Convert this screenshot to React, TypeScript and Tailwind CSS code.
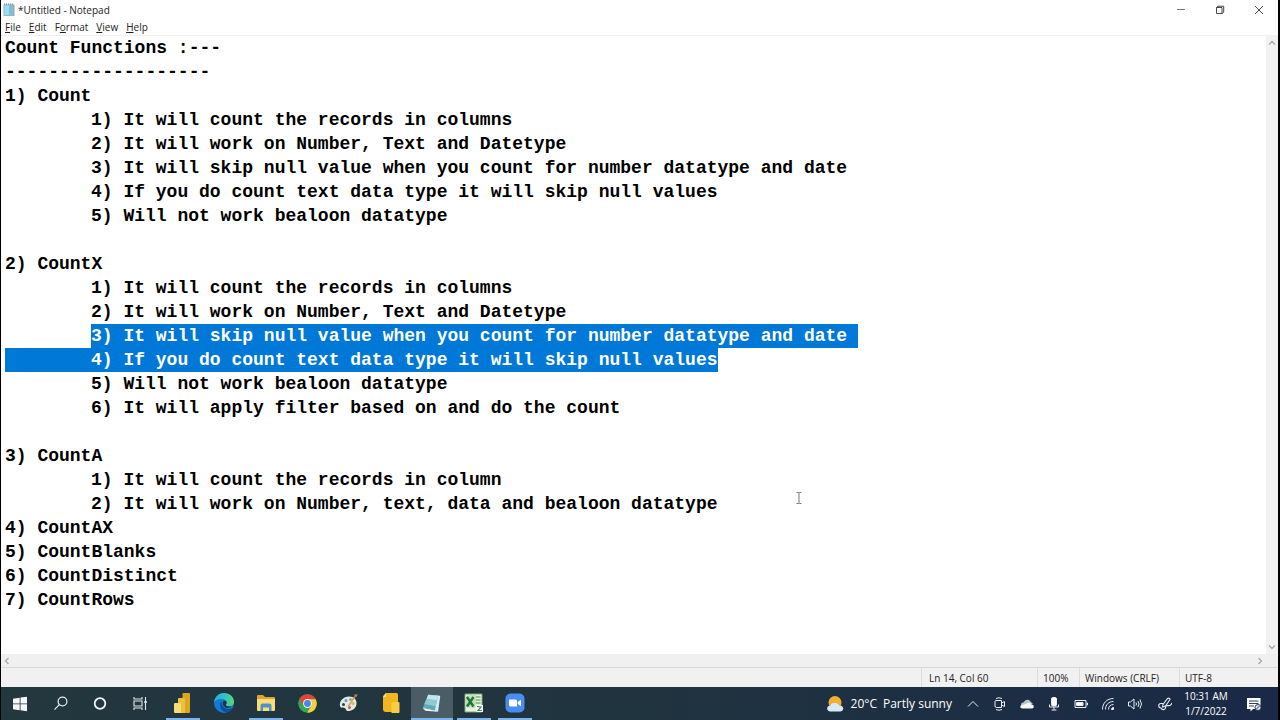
import { useEffect, useRef, type ReactNode } from "react";

const INDENTED_SELECTION =
  "3) It will skip null value when you count for number datatype and date\n\t4) If you do count text data type it will skip null values";

const NOTE = `Count Functions :---
-------------------
1) Count
\t1) It will count the records in columns
\t2) It will work on Number, Text and Datetype
\t3) It will skip null value when you count for number datatype and date
\t4) If you do count text data type it will skip null values
\t5) Will not work bealoon datatype

2) CountX
\t1) It will count the records in columns
\t2) It will work on Number, Text and Datetype
\t${INDENTED_SELECTION}
\t5) Will not work bealoon datatype
\t6) It will apply filter based on and do the count

3) CountA
\t1) It will count the records in column
\t2) It will work on Number, text, data and bealoon datatype
4) CountAX
5) CountBlanks
6) CountDistinct
7) CountRows`;

const MENUS: [string, string, string][] = [
  ["", "F", "ile"],
  ["", "E", "dit"],
  ["F", "o", "rmat"],
  ["", "V", "iew"],
  ["", "H", "elp"],
];

function NotepadIcon({ className }: { className: string }) {
  return (
    <svg viewBox="0 0 20 20" className={className} aria-hidden="true">
      <path d="M7 2.5 17.5 3.5 15.5 18 3 15.5Z" fill="#d9eef2" />
      <path d="M6.5 2.5 15.5 3.5 12.5 17 1.5 14.5Z" fill="#5fa9b8" />
      <path d="M6.5 2.5 15.5 3.5 14.6 7.5 5 6.5Z" fill="#bfe6ec" />
      <path d="M5 6.5 14.6 7.5 13.4 13 3 11Z" fill="#8fcbd6" />
      <path d="M1.5 14.5 12.5 17 15.5 18 4 17Z" fill="#f2f8f8" />
    </svg>
  );
}

function TitleIcon() {
  return (
    <svg viewBox="0 0 14 14" className="ml-px size-[14px]" aria-hidden="true">
      <path d="M3 1.5H12.5V13H3Z" fill="#a9a39a" />
      <path d="M1.5 1.5H11.500V13H1.500Z" fill="#7cc0d6" />
      <path d="M2.500 2.500H7V12H2.500Z" fill="#a5dbe8" />
      <path d="M2 1H12" stroke="#6b7f88" strokeWidth="1" strokeDasharray="1 1" />
    </svg>
  );
}

function TitleBar() {
  return (
    <header className="flex h-[19px] items-center bg-white">
      <TitleIcon />
      <h1 className="ml-[2px] flex-1 text-[10px] leading-4 text-[#222]">*Untitled - Notepad</h1>
      <button aria-label="Minimize" className="flex h-[19px] w-[39px] items-center justify-center">
        <svg viewBox="0 0 10 10" className="size-[10px]" stroke="#777" aria-hidden="true">
          <path d="M1 4.5H9" />
        </svg>
      </button>
      <button aria-label="Restore" className="flex h-[19px] w-[39px] items-center justify-center">
        <svg viewBox="0 0 10 10" className="size-[10px]" fill="none" stroke="#333" strokeWidth="0.9" aria-hidden="true">
          <path d="M1.5 2.5H7V8.5H1.5ZM1.5 2.5 3 1.2H8.7V7.2L7 8.5" />
        </svg>
      </button>
      <button aria-label="Close" className="flex h-[19px] w-[39px] items-center justify-center">
        <svg viewBox="0 0 10 10" className="size-[10px]" stroke="#333" strokeWidth="0.9" aria-hidden="true">
          <path d="M1 1 9 9M9 1 1 9" />
        </svg>
      </button>
    </header>
  );
}

function MenuBar() {
  return (
    <nav className="flex h-[17px] items-center gap-2 border-b border-[#f0f0f0] bg-white pl-1">
      {MENUS.map(([before, key, after]) => (
        <button key={key} className="text-[10px] leading-4 text-[#222]">
          {before}
          <span className="underline underline-offset-1">{key}</span>
          {after}
        </button>
      ))}
    </nav>
  );
}

function ScrollButton({ label, d }: { label: string; d: string }) {
  return (
    <button aria-label={label} className="flex size-3 items-center justify-center">
      <svg viewBox="0 0 8 8" className="size-2" fill="none" stroke="#a8a8a8" strokeWidth="1.3" aria-hidden="true">
        <path d={d} />
      </svg>
    </button>
  );
}

function Editor() {
  const ref = useRef<HTMLTextAreaElement>(null);

  useEffect(() => {
    const start = NOTE.indexOf(INDENTED_SELECTION, NOTE.indexOf("2) CountX"));
    ref.current?.focus({ preventScroll: true });
    ref.current?.setSelectionRange(start, start + INDENTED_SELECTION.length);
  }, []);

  return (
    <main className="flex flex-1 flex-col">
      <div className="relative flex flex-1">
        <textarea
          ref={ref}
          aria-label="Text editor"
          defaultValue={NOTE}
          spellCheck={false}
          wrap="off"
          className="min-w-0 flex-1 resize-none overflow-hidden bg-white pl-1 font-['Liberation_Mono',monospace] text-[18px] leading-6 font-bold text-black outline-none [tab-size:86px] selection:bg-[#0078d7] selection:text-white"
        />
        <div className="flex w-3 flex-col justify-between bg-[#f2f2f2] py-px">
          <ScrollButton label="Scroll up" d="M1 5.5 4 2.5 7 5.5" />
          <ScrollButton label="Scroll down" d="M1 2.5 4 5.5 7 2.5" />
        </div>
        <svg viewBox="0 0 8 12" className="pointer-events-none absolute top-[456px] left-[794px] h-3 w-2" fill="none" stroke="#666" strokeWidth="0.9" aria-hidden="true">
          <path d="M1.5.5H3.5L4 1 4.5.5H6.5M4 1V11M1.5 11.5H3.5L4 11 4.5 11.5H6.5" />
        </svg>
      </div>
      <div className="flex h-[13px] items-center justify-between bg-[#f0f0f0] pr-3">
        <ScrollButton label="Scroll left" d="M5.5 1 2.5 4 5.5 7" />
        <ScrollButton label="Scroll right" d="M2.5 1 5.5 4 2.5 7" />
      </div>
    </main>
  );
}

function StatusBar() {
  const cell = "flex items-center border-l border-[#dcdcdc] ";
  return (
    <footer className="flex h-5 justify-end border-t border-[#d9d9d9] bg-[#f1f1f1] text-[10px] leading-4 text-[#222]">
      <span className={cell + "w-[116px] pl-[7px]"}>Ln 14, Col 60</span>
      <span className={cell + "w-[42px] pl-[5px]"}>100%</span>
      <span className={cell + "w-[100px] pl-[5px]"}>Windows (CRLF)</span>
      <span className={cell + "w-[99px] pl-[5px]"}>UTF-8</span>
    </footer>
  );
}

const SYSTEM_BUTTONS: { name: string; icon: ReactNode }[] = [
  {
    name: "Start",
    icon: <path d="M2 4.700 8.700 3.700V9.500H2ZM9.500 3.600 16 2.700V9.500H9.500ZM2 10.300H8.700V16.200L2 15.200ZM9.500 10.300H16V17.200L9.500 16.300Z" fill="#f4f8f8" />,
  },
  {
    name: "Search",
    icon: (
      <g fill="none" stroke="#e8eeee" strokeWidth="1.2">
        <circle cx="11.5" cy="7.500" r="4.4" />
        <path d="M8.3 10.700 3.5 15.700" />
      </g>
    ),
  },
  { name: "Cortana", icon: <circle cx="9" cy="9.500" r="5.3" fill="none" stroke="#f1f5f5" strokeWidth="1.8" /> },
  {
    name: "Task View",
    icon: (
      <g fill="none" stroke="#e3eaea" strokeWidth="1.1">
        <path d="M3 3V5H11V3M3 16V14H11V16M3 7H11V12H3ZM14.500 3V16" />
        <path d="M13.3 8H15.700" strokeWidth="2" />
      </g>
    ),
  },
];

type TaskbarApp = { name: string; open?: boolean; active?: boolean; icon: ReactNode };

const APPS: TaskbarApp[] = [
  {
    name: "Power BI",
    open: true,
    icon: (
      <svg viewBox="0 0 20 20" className="size-5" aria-hidden="true">
        <path d="M10.5 0H16a1 1 0 0 1 1 1V19a1 1 0 0 1-1 1H9.5V1a1 1 0 0 1 1-1Z" fill="#dba520" />
        <path d="M6 5H11a1 1 0 0 1 1 1V20H5V6a1 1 0 0 1 1-1Z" fill="#edc13a" />
        <path d="M2 10H7a1 1 0 0 1 1 1V20H2a1 1 0 0 1-1-1V11a1 1 0 0 1 1-1Z" fill="#f7dc75" />
      </svg>
    ),
  },
  {
    name: "Microsoft Edge",
    icon: (
      <svg viewBox="0 0 20 20" className="size-5" aria-hidden="true">
        <defs>
          <linearGradient id="edge-top" x1="0" x2="1">
            <stop offset="0" stopColor="#2aa9e0" />
            <stop offset="0.6" stopColor="#35c5c3" />
            <stop offset="1" stopColor="#62d764" />
          </linearGradient>
        </defs>
        <circle cx="10" cy="10" r="10" fill="#1479cf" />
        <path d="M0 9.5C.5 4 4.700 0 10 0c5.500 0 10 4 10 8.500 0 3-2.200 5-5 5-1.800 0-3.200-.6-3.200-1.500 0-.7.900-.8.900-2.400C12.700 7.500 10.500 6 7.500 6 4 6 1 7.500 0 9.500Z" fill="url(#edge-top)" />
        <path d="M7.500 8.500C5 11 6 16.500 10.500 18.700 14 19.500 17 18 18.700 15c-3 1.600-6.500 1.400-8.700-.5-1.700-1.500-2.600-3.700-2.500-6Z" fill="#0d4e9c" />
        <path d="M12.600 9c.3 1.800-1.100 2.300-.7 3.300.6 1.200 3.600 1.600 5.600.5-1.500 2.300-5 3-7.300.8C8.500 12 8.500 9.500 9.500 8c1.200-.8 2.800-.2 3.100 1Z" fill="#22363d" />
      </svg>
    ),
  },
  {
    name: "File Explorer",
    open: true,
    icon: (
      <svg viewBox="0 0 20 20" className="size-5" aria-hidden="true">
        <path d="M1 3a1 1 0 0 1 1-1H7L9 4H18a1 1 0 0 1 1 1V8H1Z" fill="#e0a52c" />
        <path d="M1 6H19V17a1 1 0 0 1-1 1H2a1 1 0 0 1-1-1Z" fill="#fbdc7b" />
        <path d="M4.500 18V12.500a2 2 0 0 1 2-2H13.500a2 2 0 0 1 2 2V18H13V14.500H7V18Z" fill="#4d94c3" />
      </svg>
    ),
  },
  {
    name: "Google Chrome",
    icon: (
      <svg viewBox="0 0 20 20" className="size-[19px]" aria-hidden="true">
        <circle cx="10" cy="10" r="9.800" fill="#36a853" />
        <path d="M10 10 1.500 5.100A9.800 9.800 0 0 1 18.500 5.100Z" fill="#df4436" />
        <path d="M1.500 5.100 5.900 12.500 10 10 7 5Z" fill="#df4436" />
        <path d="M10 5.400H18.600A9.800 9.800 0 0 1 9.700 19.800L14 12.300Z" fill="#f8cd3f" />
        <circle cx="10" cy="10" r="4.700" fill="#f5f7f7" />
        <circle cx="10" cy="10" r="3.600" fill="#4a87e8" />
      </svg>
    ),
  },
  {
    name: "Paint",
    icon: (
      <svg viewBox="0 0 20 20" className="size-5" aria-hidden="true">
        <path d="M1 13C0 8 4.500 3.500 10 3.500c5 0 8 3 7.500 7.500-.4 4.500-4.500 7-8.500 7-2.500 0-1.500-2.500-3.500-3C3.500 14.500 1.700 15.500 1 13Z" fill="#e4e8e3" />
        <circle cx="4.500" cy="11.500" r="1.500" fill="#27454b" />
        <circle cx="7" cy="7.500" r="1.500" fill="#5c9fca" />
        <circle cx="11.500" cy="6.500" r="1.300" fill="#77a85d" />
        <circle cx="14" cy="10.500" r="1.500" fill="#d8b84c" />
        <circle cx="10.500" cy="14.500" r="1.500" fill="#c65b4b" />
        <path d="M9 14 15.500 4" stroke="#cda26b" strokeWidth="1.400" />
        <path d="M15 5 15.500 1.500 18.500 1 18 3.500Z" fill="#b27a4d" />
      </svg>
    ),
  },
  {
    name: "Power BI Report Builder",
    icon: (
      <svg viewBox="0 0 20 20" className="size-5" aria-hidden="true">
        <path d="M5 0H15.500a1.500 1.500 0 0 1 1.500 1.500V19H5A3 3 0 0 1 2 16V3Z" fill="#f3b61f" />
        <path d="M2 4 5 0V4Z" fill="#ffe08a" />
        <path d="M11.500 9H17.500a1 1 0 0 1 1 1V19a1 1 0 0 1-1 1H10.500V10a1 1 0 0 1 1-1Z" fill="#f9ce45" />
      </svg>
    ),
  },
  { name: "Notepad", open: true, active: true, icon: <NotepadIcon className="size-[22px]" /> },
  {
    name: "Excel",
    open: true,
    icon: (
      <svg viewBox="0 0 20 20" className="size-5" aria-hidden="true">
        <path d="M1 1H18V19H1Z" fill="#e8f1e3" stroke="#76a873" strokeWidth="1" />
        <path d="M12 4H16.500M12 7H16.500M12 10H16.500" stroke="#7bb274" strokeWidth="1.500" />
        <path d="M1.500 3 12 1.500V15.500L1.500 14Z" fill="#c2dfb4" />
        <path d="M3 4 9.500 13.500M9.500 4 3 13.500" stroke="#22753b" strokeWidth="2.500" />
        <path d="M11 12H19V19H12.500Z" fill="#fff" />
        <path d="M13 13.500 17 14 14 17.500H18" fill="none" stroke="#3b9150" strokeWidth="1.200" />
      </svg>
    ),
  },
  {
    name: "Zoom",
    open: true,
    icon: (
      <svg viewBox="0 0 20 20" className="size-5" aria-hidden="true">
        <rect x="0.500" y="0.500" width="19" height="19" rx="5" fill="#4a8cf2" />
        <path d="M4 6.500H10.500a1.500 1.500 0 0 1 1.500 1.500V13.500H5.500A1.500 1.500 0 0 1 4 12ZM12.700 9 16 6.700V13.300L12.700 11Z" fill="#fff" />
      </svg>
    ),
  },
];

const TRAY: { name: string; icon: ReactNode }[] = [
  { name: "Show hidden icons", icon: <path d="M3 10.500 8 5.500 13 10.500" /> },
  {
    name: "Meet Now",
    icon: <path d="M4 4.500H9.500V11.500H4.500A1.500 1.500 0 0 1 3 10V5.500A1 1 0 0 1 4 4.500ZM9.500 7 12.500 5.500V10.500L9.500 9M4 2.500Q7 1 10 2.500M4 13.500Q7 15 10 13.500" />,
  },
  {
    name: "OneDrive",
    icon: (
      <g stroke="none">
        <path d="M2 9.500C1.500 7 4 6 5 6.200 6 3.500 10 3 11.500 5.500L14 8Z" fill="#b8c2ca" />
        <path d="M3.500 12.500C1 12.500.5 9.500 3 9 5 8.700 6 8.500 7.500 7.500 9.500 6 12 7 12.500 8.500 15.500 8.500 15.500 12.500 13 12.500Z" fill="#f3f6f8" />
      </g>
    ),
  },
  {
    name: "Microphone",
    icon: (
      <g>
        <rect x="5.500" y="1.500" width="5" height="8.500" rx="1.500" fill="#fff" />
        <path d="M3.500 8.500V11H12.500V8.500M8 11V14M5.500 14H10.500" />
      </g>
    ),
  },
  {
    name: "Battery",
    icon: (
      <g>
        <path d="M2 4.500H13V11.500H2ZM13.500 7H14.500V9H13.500" />
        <path d="M3.500 6.500H10V9.500H3.500Z" fill="#fff" />
      </g>
    ),
  },
  {
    name: "Wi-Fi",
    icon: (
      <g>
        <path d="M2.500 13.500C2.500 7 7 2.500 13.500 2.500M5.500 13.500C5.500 8.700 8.700 5.500 13.500 5.500M8.500 13.500C8.500 10.400 10.400 8.500 13.500 8.500" />
        <path d="M11.500 13.500A2 2 0 0 1 13.500 11.500V13.500Z" fill="#fff" />
      </g>
    ),
  },
  {
    name: "Volume",
    icon: <path d="M1.500 6H3.500L7 3V13L3.500 10H1.500ZM9 6.500Q10 8 9 9.500M11 5Q13 8 11 11M13 3.500Q16 8 13 12.500" />,
  },
];

function WeatherIcon() {
  return (
    <svg viewBox="0 0 18 18" className="size-[18px]" aria-hidden="true">
      <circle cx="9" cy="7.500" r="6.500" fill="#f5ad32" />
      <path d="M4.500 16.500C0 16.500 0 10.500 4.500 10.500 6 6.500 12 7 13 10.500 18.500 10 18.500 16.500 14 16.500Z" fill="#d7eafa" />
    </svg>
  );
}

function Taskbar() {
  return (
    <nav aria-label="Taskbar" className="flex h-[33px] bg-linear-to-r from-[#22373e] via-[#20343f] to-[#192947] text-white">
      {SYSTEM_BUTTONS.map(({ name, icon }) => (
        <button key={name} aria-label={name} className="flex w-10 items-center justify-center">
          <svg viewBox="0 0 20 20" className="size-5" aria-hidden="true">
            {icon}
          </svg>
        </button>
      ))}
      <div className="ml-px grid w-[374px] grid-cols-9">
        {APPS.map(({ name, open, active, icon }) => (
          <button
            key={name}
            aria-label={name}
            className={active ? "flex flex-col items-center bg-[#4a5d66]" : "flex flex-col items-center"}
          >
            <span className="flex flex-1 items-center pt-px">{icon}</span>
            <span className={active ? "h-0.5 w-full bg-[#7db5ea]" : open ? "h-0.5 w-[34px] bg-[#7db5ea]" : "h-0.5"} />
          </button>
        ))}
      </div>
      <div className="flex flex-1 justify-end">
        <button className="flex items-center pr-[7px] text-[12px]">
          <WeatherIcon />
          <span className="ml-[7px]">20°C</span>
          <span className="ml-1.5">Partly sunny</span>
        </button>
        {TRAY.map(({ name, icon }) => (
          <button key={name} aria-label={name} className="flex w-[27px] items-center justify-center">
            <svg viewBox="0 0 16 16" className="size-4" fill="none" stroke="#e9eef3" strokeWidth="1" aria-hidden="true">
              {icon}
            </svg>
          </button>
        ))}
        <button aria-label="Pen workspace" className="flex w-[34px] items-center justify-center">
          <svg viewBox="0 0 16 16" className="size-4" fill="none" stroke="#e9eef3" strokeWidth="1.100" aria-hidden="true">
            <path d="M5.500 11 6 8.500 10.500 2.500Q12.500 1.500 13 3.500L8.500 10ZM6 7.500H4C1 7.500 1 12 4 12 5 14.500 8.500 14 8.500 11.500 8.500 9 10 10 11 9.500 13 10 15 8.500 14.500 7" />
          </svg>
        </button>
        <button className="flex w-12 flex-col items-center justify-center text-[10px] leading-[15px] whitespace-nowrap">
          <span>10:31 AM</span>
          <span>1/7/2022</span>
        </button>
        <button aria-label="Notifications" className="flex w-12 items-center justify-center">
          <svg viewBox="0 0 16 16" className="size-4" aria-hidden="true">
            <path d="M1 2H14.500V13H7L4.500 15.500V13H1Z" fill="#fff" />
            <path d="M3 5H12.500M3 7.500H12.500M3 10H8" stroke="#1b2c46" strokeWidth="0.900" />
            <circle cx="12" cy="11.500" r="3" fill="#dfe5ea" stroke="#1b2c46" strokeWidth="0.900" />
            <path d="M10.500 13 13.500 10" stroke="#1b2c46" strokeWidth="0.900" />
          </svg>
        </button>
      </div>
    </nav>
  );
}

export default function App() {
  return (
    <div className="flex min-h-screen flex-col border-r-2 border-l border-black bg-white font-['Open_Sans','Noto_Sans',sans-serif]">
      <TitleBar />
      <MenuBar />
      <Editor />
      <StatusBar />
      <Taskbar />
    </div>
  );
}
